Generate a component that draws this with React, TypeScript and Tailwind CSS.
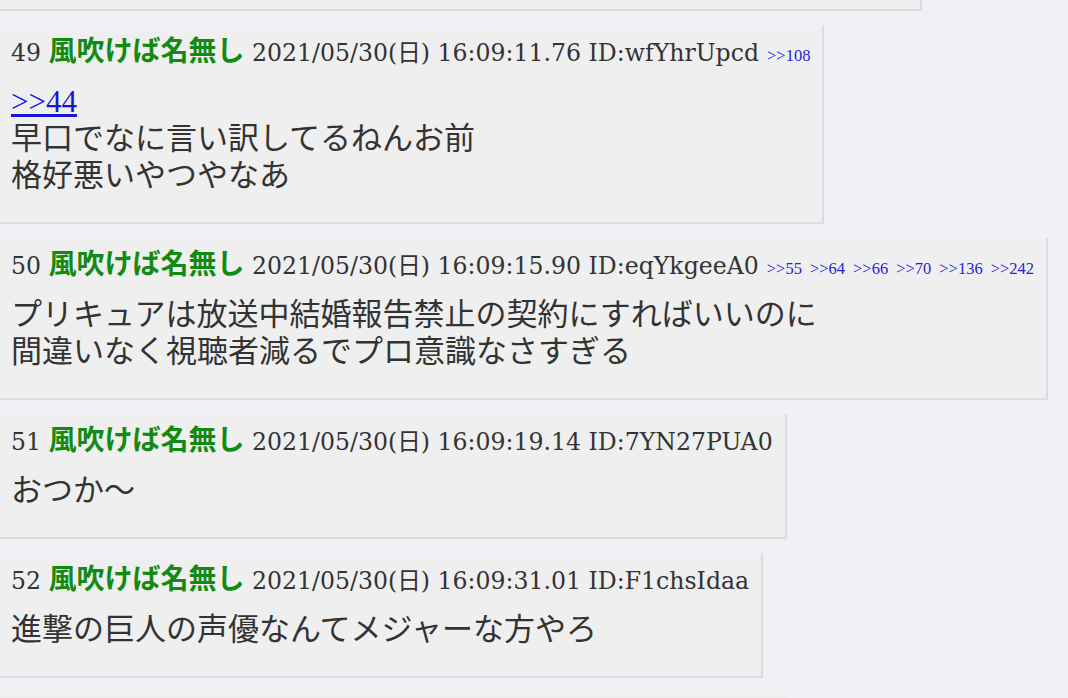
import React from "react";

type Post = {
  no: number;
  date: string;
  id: string;
  replies: string[];
  anchor?: string;
  lines: string[];
};

const posts: Post[] = [
  {
    no: 49,
    date: "2021/05/30(日) 16:09:11.76",
    id: "wfYhrUpcd",
    replies: ["108"],
    anchor: "44",
    lines: ["早口でなに言い訳してるねんお前", "格好悪いやつやなあ"],
  },
  {
    no: 50,
    date: "2021/05/30(日) 16:09:15.90",
    id: "eqYkgeeA0",
    replies: ["55", "64", "66", "70", "136", "242"],
    lines: [
      "プリキュアは放送中結婚報告禁止の契約にすればいいのに",
      "間違いなく視聴者減るでプロ意識なさすぎる",
    ],
  },
  {
    no: 51,
    date: "2021/05/30(日) 16:09:19.14",
    id: "7YN27PUA0",
    replies: [],
    lines: ["おつか〜"],
  },
  {
    no: 52,
    date: "2021/05/30(日) 16:09:31.01",
    id: "F1chsIdaa",
    replies: [],
    lines: ["進撃の巨人の声優なんてメジャーな方やろ"],
  },
];

const PostBox = ({ post }: { post: Post }) => {
  return (
    <div className="w-fit bg-[#efefef] border-r-2 border-b-2 border-[#dcdcdc] pl-[11px] pr-[12px] pt-[10px] pb-[31px] mt-[14px]">
      <div className="h-[36px] whitespace-nowrap text-[23.6px] leading-[36px] text-[#333] font-['DejaVu_Serif','Noto_Sans_CJK_JP',serif]">
        {post.no}{" "}
        <span className="text-[28px] leading-[10px] font-bold text-[#138a13] font-['Noto_Sans_CJK_JP',sans-serif]">
          風吹けば名無し
        </span>{" "}
        {post.date} ID:{post.id}
        {post.replies.map((r) => (
          <span
            key={r}
            className="ml-[8px] text-[16.5px] leading-[10px] text-[#2424d6] font-['Liberation_Serif',serif]"
          >
            &gt;&gt;{r}
          </span>
        ))}
      </div>
      <div className="mt-[9px] text-[31px] leading-[37px] text-[#333] font-['Noto_Sans_CJK_JP',sans-serif] whitespace-nowrap">
        {post.anchor && (
          <div className="h-[37px]">
            <a className="text-[#1515d8] underline leading-[10px] font-['Liberation_Serif',serif]">
              &gt;&gt;{post.anchor}
            </a>
          </div>
        )}
        {post.lines.map((l, i) => (
          <div key={i}>{l}</div>
        ))}
      </div>
    </div>
  );
};

export default function App() {
  return (
    <div className="w-[1068px] h-[698px] overflow-hidden bg-[#f0f1f6]">
      {/* tail of previous post */}
      <div className="w-[922px] h-[11px] bg-[#efefef] border-r-2 border-b-2 border-[#dcdcdc]" />
      {posts.map((p) => (
        <PostBox key={p.no} post={p} />
      ))}
      <div className="w-[788px] h-[40px] bg-[#efefef] mt-[14px]" />
    </div>
  );
}
